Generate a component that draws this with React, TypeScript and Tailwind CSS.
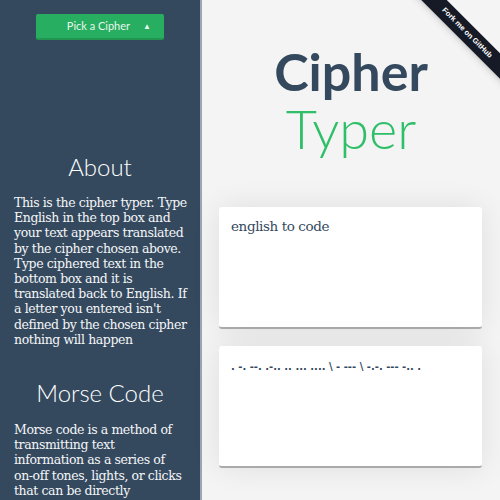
import React from 'react';

const morse = '. -. --. .-.. .. ... .... \\ - --- \\ -.-. --- -.. .';

function Ribbon() {
  return (
    <div className="absolute top-0 right-0 w-[110px] h-[110px] overflow-hidden pointer-events-none">
      <div className="absolute top-[24px] right-[-47px] w-[160px] rotate-45 bg-[#161a26] text-white text-center text-[7.5px] font-bold leading-[18px] font-['Liberation_Sans',sans-serif] shadow-md">
        Fork me on GitHub
      </div>
    </div>
  );
}

export default function App() {
  return (
    <div className="flex w-[500px] h-[500px] overflow-hidden">
      {/* sidebar */}
      <aside className="w-[200px] shrink-0 bg-[#34495e] text-white flex flex-col items-center overflow-hidden">
        <div className="shrink-0 mt-[14px] w-[128px] h-[26px] rounded-[2px] bg-[#27ae60] border-b-2 border-[#21954f] flex items-center justify-end pr-[13px] gap-[13px] text-[11px] text-[#e8f6ee] font-['Lato',sans-serif]">
          <span>Pick a Cipher</span>
          <span className="text-[8px]">▲</span>
        </div>
        <h2 className="shrink-0 mt-[113px] text-[24px] font-light leading-[28px] font-['Lato',sans-serif]">About</h2>
        <p className="shrink-0 mt-[14px] pl-[14px] pr-[10px] text-[12.5px] leading-[15.2px] font-['DejaVu_Serif',serif] tracking-[-0.4px] text-[#f4f6f8]">
          This is the cipher typer. Type English in the top box and your text appears translated by the cipher chosen above. Type ciphered text in the bottom box and it is translated back to English. If a letter you entered isn't defined by the chosen cipher nothing will happen
        </p>
        <h2 className="shrink-0 mt-[32px] text-[24px] font-light leading-[28px] font-['Lato',sans-serif]">Morse Code</h2>
        <p className="shrink-0 mt-[15px] pl-[14px] pr-[6px] w-full text-[12.5px] leading-[15.2px] font-['DejaVu_Serif',serif] tracking-[-0.4px] text-[#f4f6f8]">
          Morse code is a method of<br />transmitting text<br />information as a series of<br />on-off tones, lights, or clicks<br />that can be directly
        </p>
      </aside>

      {/* main */}
      <main className="relative flex-1 bg-[#f4f4f4] border-l-2 border-[#9aa6b6] flex flex-col items-center">
        <Ribbon />
        <h1 className="mt-[43px] text-[52px] leading-[56px] font-bold text-[#34495e] font-['Lato',sans-serif]">Cipher</h1>
        <div className="mt-[2px] text-[54px] leading-[56px] font-light text-[#2fbf68] font-['Lato',sans-serif]">Typer</div>
        <div className="mt-[50px] w-full pl-[17px] pr-[18px] flex flex-col gap-[17px]">
          <div className="h-[122px] bg-white rounded-[3px] border-b-2 border-[#aaaaaa] shadow-[0_0_30px_rgba(0,0,0,0.09)] px-[12px] pt-[9px] text-[13.5px] text-[#34495e] font-['DejaVu_Serif',serif] tracking-[-0.4px]">
            english to code
          </div>
          <div className="h-[122px] bg-white rounded-[3px] border-b-2 border-[#aaaaaa] shadow-[0_0_30px_rgba(0,0,0,0.09)] px-[12px] pt-[13px] text-[10px] text-[#34495e] font-['DejaVu_Sans',sans-serif] font-bold">
            {morse}
          </div>
        </div>
      </main>
    </div>
  );
}
